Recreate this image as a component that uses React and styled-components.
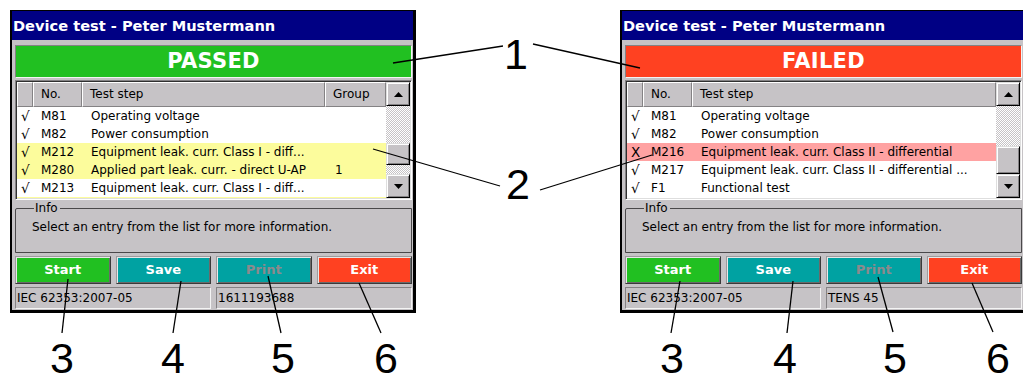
import styled, { createGlobalStyle } from 'styled-components';

const GlobalStyle = createGlobalStyle`
  html, body {
    margin: 0;
    padding: 0;
    background: #fff;
  }
  body {
    width: 1023px;
    height: 378px;
    overflow: hidden;
    font-family: "DejaVu Sans", sans-serif;
  }
`;

const Page = styled.div`
  position: relative;
  width: 1023px;
  height: 378px;
  box-sizing: border-box;
  padding: 10px 0 0 10px;
  display: flex;
  align-items: flex-start;
  gap: 204px;
`;

const Window = styled.div`
  flex: none;
  width: 406px;
  box-sizing: border-box;
  background: #c6c3c6;
  border: 1px solid #000;
  border-left-width: 2px;
  border-right-width: 3px;
  border-bottom-width: 3px;
`;

const TitleBar = styled.div`
  height: 29px;
  background: #000084;
  color: #fff;
  font-size: 14.6px;
  font-weight: bold;
  line-height: 29px;
  padding-left: 1px;
  white-space: nowrap;
`;

const Body = styled.div`
  padding: 5px 1px 1px 3px;
  display: flex;
  flex-direction: column;
`;

const Banner = styled.div`
  height: 33px;
  box-sizing: border-box;
  border: 1px solid;
  border-color: #848284 #f4f4f4 #f4f4f4 #848284;
  background: ${(p) => (p.$failed ? '#ff4121' : '#21c021')};
  color: #fff;
  font-size: 21px;
  font-weight: bold;
  line-height: 31px;
  text-align: center;
  letter-spacing: 0.3px;
`;

const ListBox = styled.div`
  margin-top: 2px;
  height: 120px;
  box-sizing: border-box;
  border: 1px solid;
  border-color: #848284 #fff #fff #848284;
  box-shadow: inset 1px 1px #303030, inset -1px -1px #dedede;
  padding: 1px;
  display: flex;
  background: #fff;
`;

const Table = styled.div`
  flex: 1;
  min-width: 0;
  overflow: hidden;
  font-size: 12px;
  color: #000;
`;

const HeaderRow = styled.div`
  display: flex;
  height: 25px;
  background: #c6c3c6;
`;

const HeaderCell = styled.div`
  flex: ${(p) => (p.$grow ? '1' : 'none')};
  width: ${(p) => (p.$w ? `${p.$w}px` : 'auto')};
  box-sizing: border-box;
  border: 1px solid;
  border-color: #fff #848284 #848284 #fff;
  box-shadow: 1px 0 #303030;
  padding-left: 7px;
  line-height: 23px;
  white-space: nowrap;
  overflow: hidden;
`;

const Row = styled.div`
  display: flex;
  height: 18px;
  line-height: 18px;
  background: ${(p) => p.$bg || '#fff'};
  white-space: nowrap;
`;

const Cell = styled.div`
  flex: ${(p) => (p.$grow ? '1' : 'none')};
  width: ${(p) => (p.$w ? `${p.$w}px` : 'auto')};
  box-sizing: border-box;
  padding-left: ${(p) => p.$pad ?? 8}px;
  overflow: hidden;
`;

const Mark = styled(Cell)`
  font-size: 13.5px;
`;

const ScrollBar = styled.div`
  flex: none;
  width: 24px;
  display: flex;
  flex-direction: column;
`;

const ScrollButton = styled.div`
  flex: none;
  height: 24px;
  box-sizing: border-box;
  background: #c6c3c6;
  border: 1px solid;
  border-color: #dedede #000 #000 #dedede;
  box-shadow: inset 1px 1px #fff, inset -1px -1px #848284;
  display: flex;
  align-items: center;
  justify-content: center;
`;

const Track = styled.div`
  flex: ${(p) => (p.$h ? 'none' : '1')};
  height: ${(p) => (p.$h ? `${p.$h}px` : 'auto')};
  background: repeating-conic-gradient(#c6c3c6 0 25%, #fff 0 50%) 0 0 / 2px 2px;
`;

const Thumb = styled(ScrollButton)`
  height: ${(p) => p.$h}px;
`;

const Info = styled.fieldset`
  margin: 2px 0 0;
  height: 51px;
  box-sizing: border-box;
  padding: 6px 0 0 16px;
  border: 1px solid #4a484a;
  border-radius: 2px 0 0 0;
  font-size: 12px;
  color: #000;
  min-width: 0;
`;

const Legend = styled.legend`
  padding: 0 2px 0 1px;
  margin-left: 2px;
  font-size: 12px;
  line-height: 12px;
`;

const ButtonRow = styled.div`
  margin-top: 3px;
  display: grid;
  grid-template-columns: repeat(4, 1fr);
  gap: 5px;
`;

const Button = styled.div`
  height: 28px;
  box-sizing: border-box;
  border: 1px solid;
  border-color: #9c9a9c #3a3a3a #3a3a3a #9c9a9c;
  box-shadow: inset 1px 1px #e8e8e8, inset -1px -1px #6a6a6a;
  background: ${(p) => p.$bg};
  color: ${(p) => (p.$disabled ? '#8c8a8c' : '#fff')};
  font-size: 13px;
  font-weight: bold;
  line-height: 26px;
  text-align: center;
`;

const StatusBar = styled.div`
  margin-top: 3px;
  display: grid;
  grid-template-columns: 1fr 1fr;
  gap: 5px;
`;

const StatusPanel = styled.div`
  height: 22px;
  box-sizing: border-box;
  border: 1px solid;
  border-color: #848284 #f4f4f4 #f4f4f4 #848284;
  padding-left: 1px;
  font-size: 12px;
  line-height: 20px;
  white-space: nowrap;
`;

const Overlay = styled.svg`
  position: absolute;
  left: 0;
  top: 0;
  width: 1023px;
  height: 378px;
  pointer-events: none;
`;

const Callout = styled.span`
  position: absolute;
  left: ${(p) => p.$x}px;
  top: ${(p) => p.$y - 33}px;
  transform: translateX(-50%);
  font-family: "Liberation Sans", Arial, sans-serif;
  font-size: 43px;
  line-height: 36px;
  color: #000;
`;

const Arrow = ({ up }) => (
  <svg width="9" height="5" viewBox="0 0 9 5">
    <polygon points={up ? '0,5 9,5 4.5,0' : '0,0 9,0 4.5,5'} fill="#000" />
  </svg>
);

const YELLOW = '#fcfc9c';
const PINK = '#ffa2a2';

const windows = [
  {
    status: 'PASSED',
    failed: false,
    group: true,
    thumb: { before: 37, size: 22 },
    rows: [
      { mark: '√', no: 'M81', step: 'Operating voltage' },
      { mark: '√', no: 'M82', step: 'Power consumption' },
      { mark: '√', no: 'M212', step: 'Equipment leak. curr. Class I - diff...', bg: YELLOW },
      { mark: '√', no: 'M280', step: 'Applied part leak. curr. - direct U-AP', group: '1', bg: YELLOW },
      { mark: '√', no: 'M213', step: 'Equipment leak. curr. Class I - diff...' },
      { bg: YELLOW },
    ],
    standard: 'IEC 62353:2007-05',
    extra: '1611193688',
  },
  {
    status: 'FAILED',
    failed: true,
    group: false,
    thumb: { before: 40, size: 28 },
    rows: [
      { mark: '√', no: 'M81', step: 'Operating voltage' },
      { mark: '√', no: 'M82', step: 'Power consumption' },
      { mark: 'X', no: 'M216', step: 'Equipment leak. curr. Class II - differential', bg: PINK },
      { mark: '√', no: 'M217', step: 'Equipment leak. curr. Class II - differential ...' },
      { mark: '√', no: 'F1', step: 'Functional test' },
    ],
    standard: 'IEC 62353:2007-05',
    extra: 'TENS 45',
  },
];

const lines = [
  [393, 63, 503, 46],
  [533, 44, 640, 68],
  [373, 149, 500, 186],
  [540, 190, 652, 155],
  [68, 279, 62, 333],
  [181, 281, 173, 333],
  [268, 276, 281, 333],
  [359, 283, 381, 333],
  [680, 281, 671, 333],
  [793, 281, 787, 333],
  [878, 277, 893, 332],
  [972, 283, 993, 332],
];

const labels = [
  { n: '1', x: 516, y: 69 },
  { n: '2', x: 518, y: 199 },
  { n: '3', x: 62, y: 373 },
  { n: '4', x: 173, y: 373 },
  { n: '5', x: 283, y: 373 },
  { n: '6', x: 386, y: 373 },
  { n: '3', x: 672, y: 373 },
  { n: '4', x: 785, y: 373 },
  { n: '5', x: 895, y: 373 },
  { n: '6', x: 998, y: 373 },
];

const TestWindow = ({ data }) => (
  <Window>
    <TitleBar>Device test - Peter Mustermann</TitleBar>
    <Body>
      <Banner $failed={data.failed}>{data.status}</Banner>
      <ListBox>
        <Table>
          <HeaderRow>
            <HeaderCell $w={16} />
            <HeaderCell $w={49}>No.</HeaderCell>
            <HeaderCell $grow>Test step</HeaderCell>
            {data.group && <HeaderCell $w={61}>Group</HeaderCell>}
          </HeaderRow>
          {data.rows.map((r, i) => (
            <Row key={i} $bg={r.bg}>
              <Mark $w={16} $pad={4}>{r.mark}</Mark>
              <Cell $w={49}>{r.no}</Cell>
              <Cell $grow $pad={9}>{r.step}</Cell>
              {data.group && <Cell $w={61} $pad={10}>{r.group}</Cell>}
            </Row>
          ))}
        </Table>
        <ScrollBar>
          <ScrollButton>
            <Arrow up />
          </ScrollButton>
          <Track $h={data.thumb.before} />
          <Thumb $h={data.thumb.size} />
          <Track />
          <ScrollButton>
            <Arrow />
          </ScrollButton>
        </ScrollBar>
      </ListBox>
      <Info>
        <Legend>Info</Legend>
        Select an entry from the list for more information.
      </Info>
      <ButtonRow>
        <Button $bg="#21c021">Start</Button>
        <Button $bg="#00a2a2">Save</Button>
        <Button $bg="#00a2a2" $disabled>Print</Button>
        <Button $bg="#ff4121">Exit</Button>
      </ButtonRow>
      <StatusBar>
        <StatusPanel>{data.standard}</StatusPanel>
        <StatusPanel>{data.extra}</StatusPanel>
      </StatusBar>
    </Body>
  </Window>
);

export default function App() {
  return (
    <Page>
      <GlobalStyle />
      {windows.map((w) => (
        <TestWindow key={w.status} data={w} />
      ))}
      <Overlay viewBox="0 0 1023 378">
        {lines.map(([x1, y1, x2, y2], i) => (
          <line key={i} x1={x1} y1={y1} x2={x2} y2={y2} stroke="#000" strokeWidth="1.3" />
        ))}
      </Overlay>
      {labels.map((l, i) => (
        <Callout key={i} $x={l.x} $y={l.y}>
          {l.n}
        </Callout>
      ))}
    </Page>
  );
}
